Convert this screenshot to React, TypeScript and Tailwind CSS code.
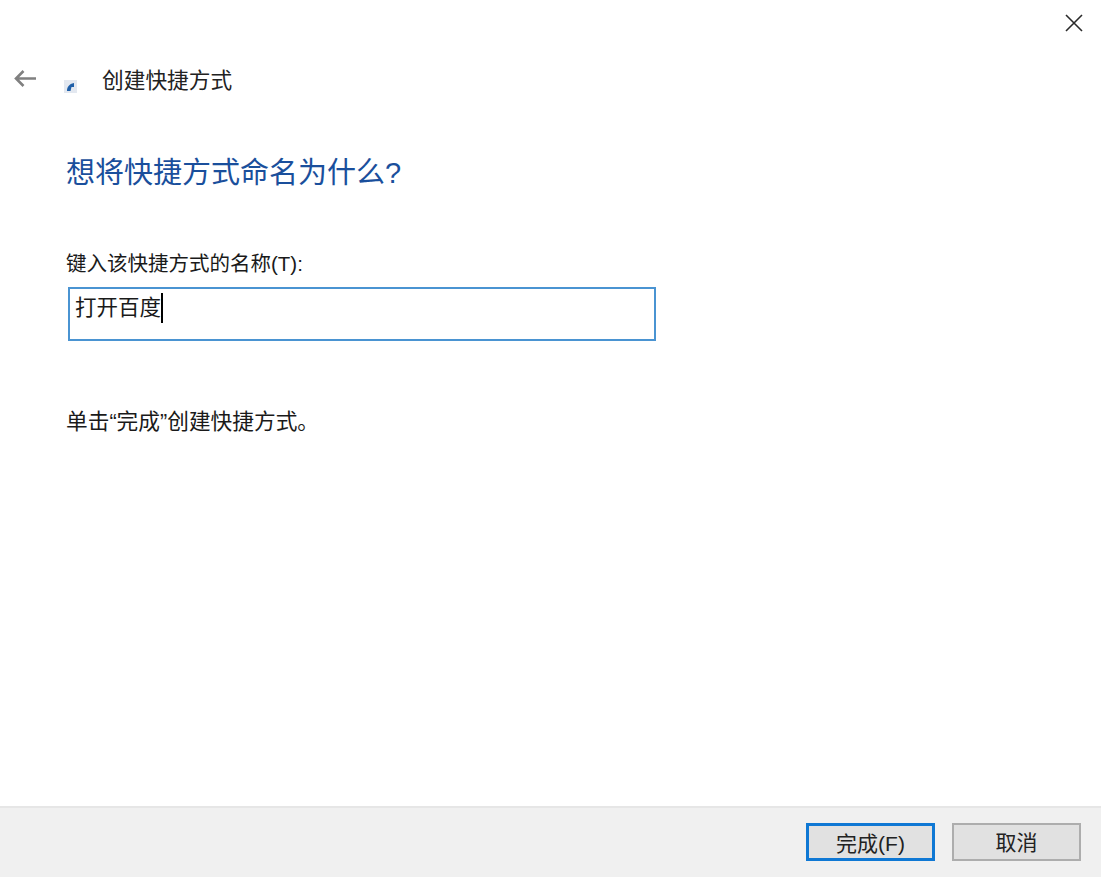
export default function App() {
  return (
    <div className="h-[877px] w-full flex flex-col bg-white text-[#1a1a1a] [font-family:'Liberation_Sans','Noto_Sans_CJK_SC',sans-serif] overflow-hidden">
      <div className="flex justify-end pt-[14px] pr-[18px] h-[58px]">
        <svg width="18" height="18" viewBox="0 0 18 18" fill="none" stroke="#2a2a2a" strokeWidth="1.6">
          <path d="M1 1 L17 17 M17 1 L1 17" />
        </svg>
      </div>
      <div className="flex items-center h-[40px] pl-[13px]">
        <svg width="23" height="19" viewBox="0 0 23 19" fill="none" stroke="#808080" strokeWidth="2.6">
          <path d="M23 9.5 H3 M10.5 2 L3 9.5 L10.5 17" />
        </svg>
        <div className="ml-[28px] mt-[17px] w-[13px] h-[13px] bg-[#e3e8f0] flex items-center justify-center">
          <svg width="9" height="10" viewBox="0 0 9 10"><path d="M1 9 C1 5 3 2 8 1 L8 5 L5.5 5 L4.5 9 Z" fill="#1f5fa8" /></svg>
        </div>
        <span className="ml-[25px] mt-[5px] text-[21.7px] leading-[28px] text-[#222]">创建快捷方式</span>
      </div>
      <div className="flex-1 pl-[66px] pt-[57px] flex flex-col items-start">
        <h1 className="text-[29px] leading-[36px] font-normal text-[#1a4f9c]">想将快捷方式命名为什么?</h1>
        <label className="mt-[59px] text-[20.5px] leading-[28px]">键入该快捷方式的名称(T):</label>
        <div className="mt-[9px] ml-[2px] w-[588px] h-[54px] border-2 border-[#4a94d2] pl-[5px] pt-[4px] text-[21.5px] leading-[30px] flex items-start">
          <span>打开百度</span>
          <span className="w-[2px] h-[30px] bg-black" />
        </div>
        <p className="mt-[67px] text-[21.7px] leading-[28px]">单击“完成”创建快捷方式。</p>
      </div>
      <div className="h-[71px] bg-[#f0f0f0] border-t-2 border-[#e6e6e6] flex justify-end items-start gap-[17px] pt-[15px] pr-[20px]">
        <button className="w-[129px] h-[38px] bg-[#e1e1e1] border-[3px] border-[#0f78d4] pt-[2px] text-[21px] text-[#222]">完成(F)</button>
        <button className="w-[129px] h-[38px] bg-[#e1e1e1] border-[2.5px] border-[#adadad] pt-[2px] text-[21px] text-[#222]">取消</button>
      </div>
    </div>
  );
}
